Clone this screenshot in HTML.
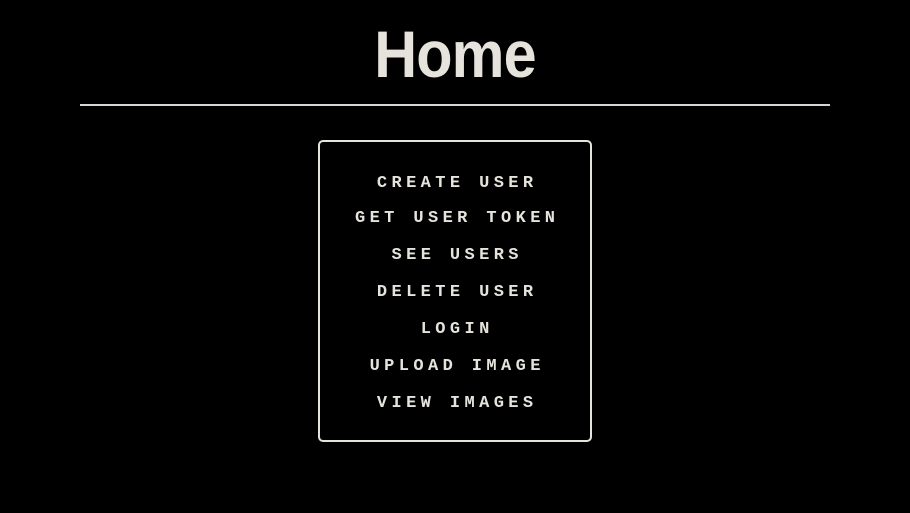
<!DOCTYPE html>
<html><head><style>
html,body{margin:0;background:#000;width:910px;height:513px;overflow:hidden}
h1{position:absolute;left:0;width:910px;top:19px;margin:0;text-align:center;font:bold 66px/70px "Liberation Sans",sans-serif;color:#e5e3dc;transform:scaleX(0.9);letter-spacing:-1px}
.line{position:absolute;left:80px;top:104px;width:750px;height:2px;background:#d8d6d0}
.box{position:absolute;left:318px;top:140px;width:270px;height:298px;border:2px solid #e5e3dc;border-radius:5px}
.item{position:absolute;left:318px;width:274px;text-align:center;font:bold 17px/18px "Liberation Mono",monospace;color:#e5e3dc;letter-spacing:4.4px;text-indent:4.4px}
</style></head><body>
<h1>Home</h1>
<div class="line"></div>
<div class="box"></div>
<div class="item" style="top:175px">CREATE USER</div>
<div class="item" style="top:210px">GET USER TOKEN</div>
<div class="item" style="top:247px">SEE USERS</div>
<div class="item" style="top:284px">DELETE USER</div>
<div class="item" style="top:321px">LOGIN</div>
<div class="item" style="top:358px">UPLOAD IMAGE</div>
<div class="item" style="top:395px">VIEW IMAGES</div>
</body></html>
